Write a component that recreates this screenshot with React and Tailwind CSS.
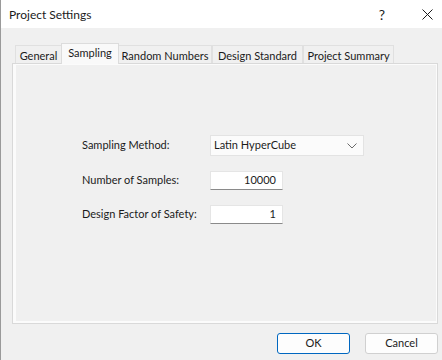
import React, { useState } from "react";

const tabs = [
  { name: "General", w: "w-[47px]" },
  { name: "Sampling", w: "w-[58px]" },
  { name: "Random Numbers", w: "w-[94px]" },
  { name: "Design Standard", w: "w-[91px]" },
  { name: "Project Summary", w: "w-[91px]" },
];

const Field = ({ value }) => (
  <div className="w-[73px] h-[19px] bg-white border border-[#e5e5e5] border-b-[#8a8a8a] flex items-center justify-end pr-[6px]">
    {value}
  </div>
);

const App = () => {
  const [active, setActive] = useState("Sampling");

  return (
    <div
      className="w-[442px] h-[360px] bg-[#f0f0f0] border-l border-[#9a9a9a] flex flex-col text-[11px] text-[#1b1b1b] overflow-hidden whitespace-nowrap"
      style={{ fontFamily: 'Lato, "Liberation Sans", sans-serif' }}
    >
      {/* title bar */}
      <div className="h-[28px] bg-white flex items-center pl-[8px] shrink-0 text-[12px]">
        <span className="flex-1 pt-[1px]">Project Settings</span>
        <span className="w-[20px] text-center text-[14px] mr-[20px]">?</span>
        <span className="w-[30px] flex justify-center">
          <svg width="11" height="11" viewBox="0 0 11 11">
            <path d="M0.5 0.5L10.5 10.5M10.5 0.5L0.5 10.5" stroke="#1b1b1b" strokeWidth="1" />
          </svg>
        </span>
      </div>

      {/* tabs */}
      <div className="mt-[15px] ml-[11px] w-[426px] flex flex-col">
        <div className="flex items-end h-[20px] pl-[3px]">
          {tabs.map((t) => {
            const sel = t.name === active;
            return (
              <button
                key={t.name}
                onClick={() => setActive(t.name)}
                className={
                  sel
                    ? `${t.w} h-[21px] -mx-[1px] bg-[#f9f9f9] border border-b-0 border-[#dcdcdc] relative z-10 -mb-[1px] leading-none pb-[3px]`
                    : `${t.w} h-[18px] bg-[#f0f0f0] border border-b-0 border-[#e0e0e0] leading-none pt-[1px]`
                }
              >
                {t.name}
              </button>
            );
          })}
        </div>
        <div className="h-[261px] border border-[#d9d9d9]">
          <div className="h-full border-l-[3px] border-t border-r border-b-2 border-[#fbfbfb] bg-[#f0f0f0] pt-[70px] pl-[66px]">
            <div className="grid grid-cols-[128px_auto] items-center gap-y-[15px]">
              <span>Sampling Method:</span>
              <div className="w-[154px] h-[21px] bg-[#fbfbfb] border border-[#e3e3e3] flex items-center pl-[3px] pr-[6px]">
                <span className="flex-1">Latin HyperCube</span>
                <svg width="10" height="6" viewBox="0 0 10 6">
                  <path d="M0.5 0.5L5 5L9.5 0.5" fill="none" stroke="#6b6b6b" strokeWidth="1" />
                </svg>
              </div>
              <span>Number of Samples:</span>
              <Field value="10000" />
              <span>Design Factor of Safety:</span>
              <Field value="1" />
            </div>
          </div>
        </div>
      </div>

      {/* buttons */}
      <div className="flex justify-end gap-[15px] mt-[9px] mr-[4px]">
        <button className="w-[73px] h-[21px] bg-[#fdfdfd] border border-[#0067c0] rounded-[3px]">
          OK
        </button>
        <button className="w-[73px] h-[21px] bg-[#fdfdfd] border border-[#d0d0d0] rounded-[3px]">
          Cancel
        </button>
      </div>
    </div>
  );
};

export default App;
